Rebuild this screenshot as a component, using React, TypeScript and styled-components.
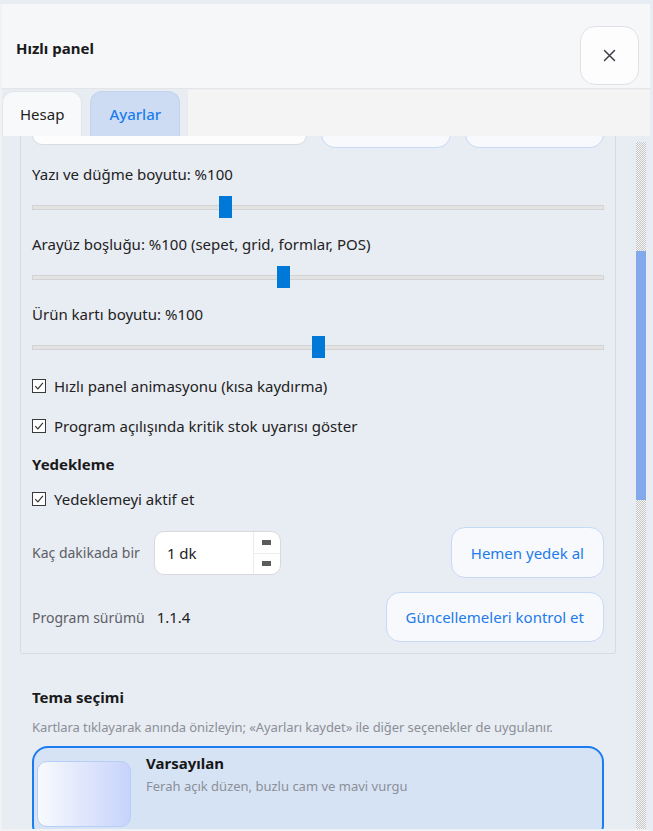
import React, { useLayoutEffect, useRef, useState } from "react";
import styled, { createGlobalStyle } from "styled-components";

const FONT = `"Segoe UI", "Noto Sans", "Open Sans", sans-serif`;
const BLUE = "#1d7bea";

const GlobalStyle = createGlobalStyle`
  html, body { margin: 0; padding: 0; background: #e8ecf3; }
  body { font-family: ${FONT}; color: #1f1f1f; overflow: hidden; }
  * { box-sizing: border-box; }
  button, input { font-family: inherit; }
`;

const Panel = styled.div`
  margin-top: 4px;
  width: 650px;
  height: 827px;
  display: flex;
  flex-direction: column;
  background: #e8ecf3;
  border-left: 2px solid #f1f2f4;
  border-bottom: 2px solid #f1f2f4;
`;

const Header = styled.header`
  flex: none;
  height: 85px;
  display: flex;
  justify-content: space-between;
  align-items: flex-start;
  padding: 0 11px 0 14px;
  background: #f6f7f9;
  border-bottom: 1px solid #e3e5e9;
`;

const Title = styled.h1`
  margin: 34px 0 0;
  font-size: 15px;
  line-height: 20px;
  font-weight: 700;
  color: #1a1a1a;
`;

const CloseButton = styled.button`
  margin-top: 22px;
  width: 59px;
  height: 59px;
  display: grid;
  place-items: center;
  border: 1px solid #dfe1e5;
  border-radius: 15px;
  background: #fdfdfd;
  padding: 0;
  cursor: pointer;
`;

const TabBar = styled.div`
  flex: none;
  height: 47px;
  display: flex;
`;

const TabList = styled.div`
  display: flex;
  gap: 8px;
  padding: 2px 7px 0 0;
`;

const Tab = styled.button<{ $active?: boolean }>`
  height: 45px;
  padding: 0 ${(p) => (p.$active ? 18 : 17)}px;
  border: 1px solid ${(p) => (p.$active ? "#c3d3ec" : "#e3e5ea")};
  border-bottom: none;
  border-radius: 12px 12px 0 0;
  background: ${(p) => (p.$active ? "#cddcf2" : "#f8f9fb")};
  color: ${(p) => (p.$active ? "#1a7cf0" : "#222")};
  font-size: 15px;
  font-weight: ${(p) => (p.$active ? 500 : 400)};
  cursor: pointer;
`;

const TabFiller = styled.div`
  flex: 1;
  background: #f4f4f5;
  border-left: 1px solid #e9eaec;
  border-top: 1px solid #eeeff1;
`;

const Body = styled.div`
  flex: 1;
  min-height: 0;
  display: flex;
  padding-right: 4px;
`;

const Scroll = styled.div`
  flex: 1;
  min-width: 0;
  overflow-y: auto;
  overflow-x: hidden;
  scrollbar-width: none;
  &::-webkit-scrollbar {
    display: none;
  }
`;

const Rail = styled.div`
  flex: none;
  width: 10px;
  display: flex;
  flex-direction: column;
  padding-top: 6px;
`;

const RailTrack = styled.div<{ $h?: number }>`
  flex: ${(p) => (p.$h ? `0 0 ${p.$h}px` : "1")};
  background: repeating-conic-gradient(#c6c6c6 0% 25%, #f6f6f6 0% 50%) 0 0 / 2px 2px;
`;

const RailThumb = styled.div<{ $h: number }>`
  flex: 0 0 ${(p) => p.$h}px;
  background: #84a9ea;
`;

const Content = styled.div`
  display: flex;
  flex-direction: column;
  gap: 12px;
  padding: 12px 20px 24px 18px;
`;

const Card = styled.section`
  display: flex;
  flex-direction: column;
  gap: 16px;
  padding: 11px;
  border: 1px solid #d8dbe1;
  border-radius: 2px;
`;

const SectionTitle = styled.h2<{ $tight?: boolean }>`
  margin: 0 0 ${(p) => (p.$tight ? -3 : 0)}px;
  font-size: 15px;
  line-height: 20px;
  font-weight: 700;
  color: #1a1a1a;
`;

const Field = styled.div`
  display: flex;
  flex-direction: column;
  gap: 12px;
`;

const FieldLabel = styled.label`
  font-size: 15px;
  line-height: 20px;
  color: #222;
`;

const TextInput = styled.input`
  flex: 1;
  min-width: 0;
  height: 44px;
  padding: 0 12px;
  border: 1px solid #d9dbe0;
  border-radius: 10px;
  background: #fdfdfd;
  font-size: 15px;
  color: #222;
  outline: none;
`;

const Range = styled.input`
  -webkit-appearance: none;
  appearance: none;
  width: 100%;
  height: 22px;
  margin: 0;
  background: transparent;
  &::-webkit-slider-runnable-track {
    height: 5px;
    background: #e3e3e3;
    border: 1px solid #d3d3d3;
  }
  &::-webkit-slider-thumb {
    -webkit-appearance: none;
    appearance: none;
    width: 13px;
    height: 22px;
    margin-top: -9.5px;
    border: none;
    border-radius: 0;
    background: #0078d7;
  }
`;

const CheckRow = styled.label`
  display: flex;
  align-items: center;
  gap: 8px;
  height: 24px;
  font-size: 15px;
  color: #222;
  cursor: pointer;
`;

const CheckBox = styled.span`
  width: 14px;
  height: 14px;
  flex: none;
  display: grid;
  place-items: center;
  border: 1px solid #3a3a3a;
  background: #fff;
`;

const Row = styled.div<{ $gap?: number; $pull?: number }>`
  display: flex;
  align-items: center;
  gap: ${(p) => p.$gap ?? 14}px;
  margin-top: ${(p) => -(p.$pull ?? 0)}px;
`;

const MutedLabel = styled.span`
  font-size: 14px;
  color: #5d6066;
`;

const Value = styled.span`
  font-size: 15px;
  color: #222;
`;

const ActionButton = styled.button<{ $push?: boolean; $w?: number; $h?: number }>`
  flex: none;
  height: ${(p) => p.$h ?? 51}px;
  width: ${(p) => (p.$w ? `${p.$w}px` : "auto")};
  padding: 0 19px;
  margin-left: ${(p) => (p.$push ? "auto" : "0")};
  border: 1px solid #c6daf6;
  border-radius: 14px;
  background: #f7f9fd;
  color: ${BLUE};
  font-size: 15px;
  white-space: nowrap;
  cursor: pointer;
`;

const NumberBox = styled.div`
  width: 127px;
  height: 44px;
  display: flex;
  border: 1px solid #d9d9d9;
  border-radius: 10px;
  background: #fff;
  overflow: hidden;
`;

const NumberField = styled.input`
  flex: 1;
  min-width: 0;
  border: none;
  padding: 0 12px;
  font-size: 15px;
  color: #222;
  background: transparent;
  outline: none;
`;

const Spin = styled.div`
  width: 27px;
  display: grid;
  grid-template-rows: 1fr 1fr;
  border-left: 1px solid #ececec;
`;

const SpinButton = styled.span<{ $lower?: boolean }>`
  display: grid;
  place-items: center;
  border-top: ${(p) => (p.$lower ? "1px solid #ececec" : "none")};
  &::after {
    content: "";
    width: 9px;
    height: 5px;
    background: #5b5b5b;
  }
`;

const ThemeSection = styled.section`
  display: flex;
  flex-direction: column;
  padding: 21px 12px 12px;
`;

const ThemeHint = styled.p`
  margin: 11px 0 10px;
  font-size: 13px;
  line-height: 18px;
  letter-spacing: -0.08px;
  color: #8b8f97;
`;

const ThemeCard = styled.button<{ $active?: boolean }>`
  display: grid;
  grid-template-columns: 94px 1fr;
  column-gap: 15px;
  align-items: start;
  min-height: 95px;
  padding: 5px 12px 5px 3px;
  border: 2px solid ${(p) => (p.$active ? "#1a7cf0" : "#d2d8e2")};
  border-radius: 16px;
  background: ${(p) => (p.$active ? "#d6e3f5" : "#eef1f6")};
  text-align: left;
  cursor: pointer;
`;

const ThemePreview = styled.span<{ $from: string; $to: string }>`
  align-self: center;
  height: 66px;
  border: 1px solid #b8cef6;
  border-radius: 10px;
  background: linear-gradient(90deg, ${(p) => p.$from}, ${(p) => p.$to});
`;

const ThemeText = styled.span`
  display: flex;
  flex-direction: column;
  gap: 4px;
`;

const ThemeName = styled.span`
  font-size: 15px;
  line-height: 20px;
  font-weight: 700;
  color: #161616;
`;

const ThemeDesc = styled.span`
  font-size: 13px;
  line-height: 18px;
  color: #8b8f97;
`;

const XIcon = () => (
  <svg width="13" height="13" viewBox="0 0 13 13" fill="none">
    <path d="M1.5 1.5 L11.5 11.5 M11.5 1.5 L1.5 11.5" stroke="#3b3f47" strokeWidth="1.5" strokeLinecap="round" />
  </svg>
);

const Check = ({ label, defaultChecked = true }: { label: string; defaultChecked?: boolean }) => {
  const [on, setOn] = useState(defaultChecked);
  return (
    <CheckRow onClick={() => setOn(!on)}>
      <CheckBox>
        {on && (
          <svg width="10" height="10" viewBox="0 0 10 10" fill="none">
            <path d="M1.2 5.2 L3.9 7.9 L8.9 1.9" stroke="#333" strokeWidth="1.2" />
          </svg>
        )}
      </CheckBox>
      {label}
    </CheckRow>
  );
};

const SliderField = ({ label, min, max }: { label: string; min: number; max: number }) => {
  const [v, setV] = useState(100);
  return (
    <Field>
      <FieldLabel>{label.replace("{v}", String(v))}</FieldLabel>
      <Range type="range" min={min} max={max} value={v} onChange={(e) => setV(Number(e.target.value))} />
    </Field>
  );
};

export default function App() {
  const scrollRef = useRef<HTMLDivElement>(null);
  const anchorRef = useRef<HTMLDivElement>(null);
  const [tab, setTab] = useState(1);

  useLayoutEffect(() => {
    const s = scrollRef.current;
    const a = anchorRef.current;
    if (!s || !a) return;
    s.scrollTop = 0;
    s.scrollTop = a.getBoundingClientRect().bottom - s.getBoundingClientRect().top - 12;
  }, []);

  return (
    <>
      <GlobalStyle />
      <Panel>
        <Header>
          <Title>Hızlı panel</Title>
          <CloseButton aria-label="Kapat">
            <XIcon />
          </CloseButton>
        </Header>
        <TabBar>
          <TabList>
            <Tab $active={tab === 0} onClick={() => setTab(0)}>Hesap</Tab>
            <Tab $active={tab === 1} onClick={() => setTab(1)}>Ayarlar</Tab>
          </TabList>
          <TabFiller />
        </TabBar>
        <Body>
          <Scroll ref={scrollRef}>
            <Content>
              <Card>
                <Row ref={anchorRef} $gap={14}>
                  <TextInput aria-label="Yazıcı" />
                  <ActionButton $w={130} aria-label="Yazıcıları bul" />
                  <ActionButton $w={139} aria-label="Test yazdır" />
                </Row>
                <SliderField label="Yazı ve düğme boyutu: %{v}" min={75} max={150} />
                <SliderField label="Arayüz boşluğu: %{v} (sepet, grid, formlar, POS)" min={65} max={145} />
                <SliderField label="Ürün kartı boyutu: %{v}" min={50} max={150} />
                <Check label="Hızlı panel animasyonu (kısa kaydırma)" />
                <Check label="Program açılışında kritik stok uyarısı göster" />
                <SectionTitle $tight>Yedekleme</SectionTitle>
                <Check label="Yedeklemeyi aktif et" />
                <Row>
                  <MutedLabel>Kaç dakikada bir</MutedLabel>
                  <NumberBox>
                    <NumberField defaultValue="1 dk" />
                    <Spin>
                      <SpinButton />
                      <SpinButton $lower />
                    </Spin>
                  </NumberBox>
                  <ActionButton $push>Hemen yedek al</ActionButton>
                </Row>
                <Row $gap={12} $pull={2}>
                  <MutedLabel>Program sürümü</MutedLabel>
                  <Value>1.1.4</Value>
                  <ActionButton $push $h={50}>Güncellemeleri kontrol et</ActionButton>
                </Row>
              </Card>
              <ThemeSection>
                <SectionTitle>Tema seçimi</SectionTitle>
                <ThemeHint>
                  Kartlara tıklayarak anında önizleyin; «Ayarları kaydet» ile diğer seçenekler de uygulanır.
                </ThemeHint>
                <ThemeCard $active>
                  <ThemePreview $from="#f8fafd" $to="#c7d3fb" />
                  <ThemeText>
                    <ThemeName>Varsayılan</ThemeName>
                    <ThemeDesc>Ferah açık düzen, buzlu cam ve mavi vurgu</ThemeDesc>
                  </ThemeText>
                </ThemeCard>
              </ThemeSection>
            </Content>
          </Scroll>
          <Rail aria-hidden>
            <RailTrack $h={109} />
            <RailThumb $h={249} />
            <RailTrack />
          </Rail>
        </Body>
      </Panel>
    </>
  );
}
